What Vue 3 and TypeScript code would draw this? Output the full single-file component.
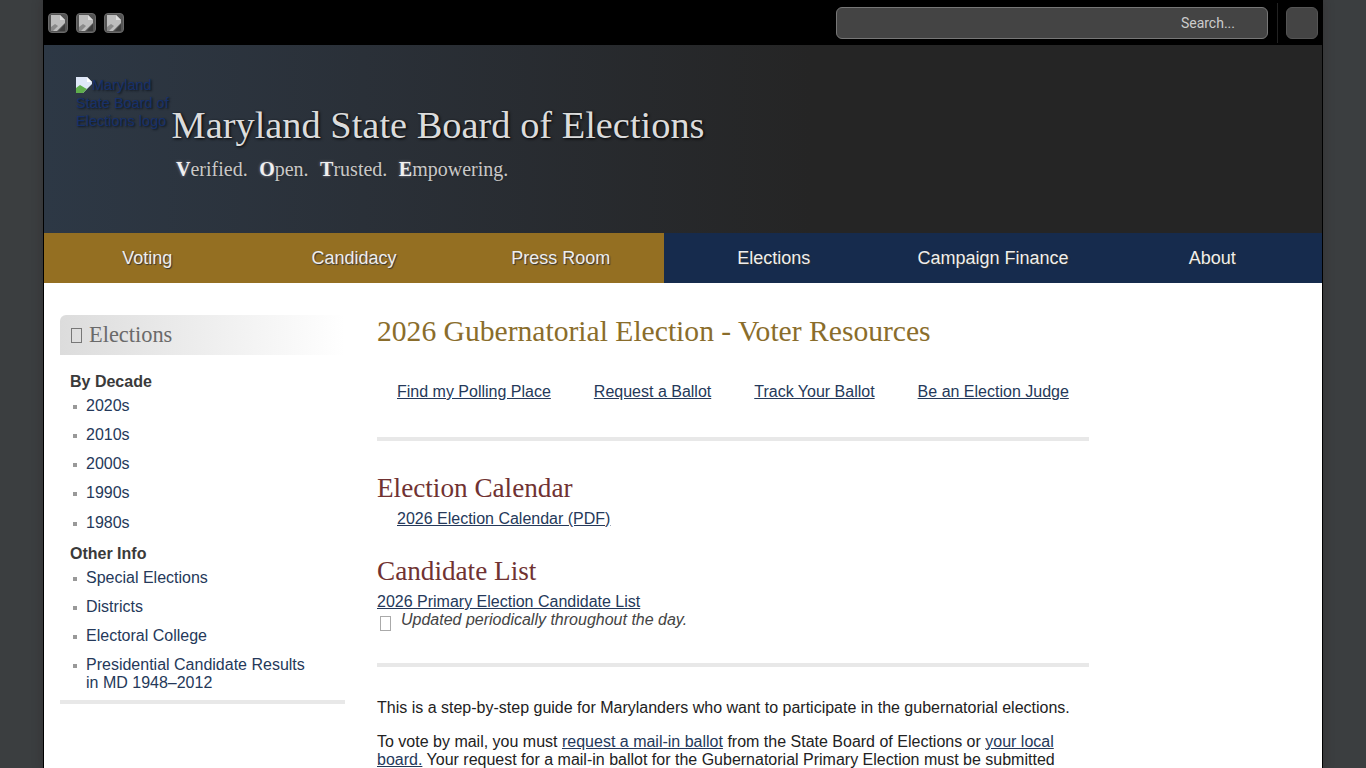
<template>
  <div class="page">
    <div class="topbar">
      <div class="social">
        <span v-for="n in 3" :key="n" class="social-btn">
          <svg width="14" height="16" viewBox="0 0 14 16">
            <path d="M0 0h9l5 5v3L6 16H0z" fill="#bdbdbd" />
            <path d="M9 0v5h5z" fill="#dedede" />
            <path d="M0 16v-4l4-3 3 2-5 5z" fill="#8a8a8a" />
            <path d="M14 9v7H8z" fill="#3c3c3c" />
          </svg>
        </span>
      </div>
      <div class="search-area">
        <div class="search-box"><span>Search...</span></div>
        <div class="divider"></div>
        <div class="search-btn"></div>
      </div>
    </div>

    <header class="banner">
      <div class="logo">
        <svg class="broken" width="16" height="16" viewBox="0 0 16 16">
          <path d="M0 0h11l5 5v2L7 16H0z" fill="#dfe8f8" />
          <path d="M11 0v5h5z" fill="#ffffff" />
          <path d="M0 16v-5l4-3 5 3 2 1-4 4z" fill="#5fae4c" />
        </svg>
        <span class="logo-alt">Maryland State Board of Elections logo</span>
      </div>
      <div class="titles">
        <h1>Maryland State Board of Elections</h1>
        <p class="tagline">
          <template v-for="w in motto" :key="w">
            <span class="word"><b>{{ w[0] }}</b>{{ w.slice(1) }}</span>
          </template>
        </p>
      </div>
    </header>

    <nav class="mainnav">
      <div class="nav-group gold">
        <a v-for="item in navGold" :key="item">{{ item }}</a>
      </div>
      <div class="nav-group navy">
        <a v-for="item in navBlue" :key="item">{{ item }}</a>
      </div>
    </nav>

    <div class="body-wrap">
      <aside class="sidebar">
        <h2 class="side-title"><span class="tofu"></span>Elections</h2>
        <h3>By Decade</h3>
        <ul>
          <li v-for="d in decades" :key="d"><a>{{ d }}</a></li>
        </ul>
        <h3 class="other">Other Info</h3>
        <ul>
          <li v-for="o in others" :key="o"><a>{{ o }}</a></li>
          <li class="multi"><a>Presidential Candidate Results<br />in MD 1948–2012</a></li>
        </ul>
        <div class="side-end"></div>
      </aside>

      <main class="content">
        <h1 class="page-title">2026 Gubernatorial Election - Voter Resources</h1>
        <div class="quick">
          <a v-for="q in quick" :key="q">{{ q }}</a>
        </div>
        <hr />
        <h2 class="section first">Election Calendar</h2>
        <p class="indent"><a>2026 Election Calendar (PDF)</a></p>
        <h2 class="section second">Candidate List</h2>
        <p class="tight"><a>2026 Primary Election Candidate List</a></p>
        <p class="note"><span class="tofu small"></span><em>Updated periodically throughout the day.</em></p>
        <hr class="low" />
        <p class="para">This is a step-by-step guide for Marylanders who want to participate in the gubernatorial elections.</p>
        <p class="para">
          To vote by mail, you must <a>request a mail-in ballot</a> from the State Board of Elections or
          <a>your local board.</a> Your request for a mail-in ballot for the Gubernatorial Primary Election must be submitted
        </p>
      </main>
    </div>
  </div>
</template>

<script setup lang="ts">
const motto: string[] = ['Verified.', 'Open.', 'Trusted.', 'Empowering.'];
const navGold: string[] = ['Voting', 'Candidacy', 'Press Room'];
const navBlue: string[] = ['Elections', 'Campaign Finance', 'About'];
const decades: string[] = ['2020s', '2010s', '2000s', '1990s', '1980s'];
const others: string[] = ['Special Elections', 'Districts', 'Electoral College'];
const quick: string[] = ['Find my Polling Place', 'Request a Ballot', 'Track Your Ballot', 'Be an Election Judge'];
</script>

<style>
html, body { height: 768px; overflow: hidden; background: #3b3e40; }
</style>

<style scoped>
.page {
  width: 1278px; height: 768px; margin-left: 44px; overflow: hidden;
  background: #fff; box-shadow: 0 0 0 1px #000, 0 0 10px 1px rgba(40, 30, 30, .35);
  font-family: "Liberation Sans", Arial, sans-serif; font-size: 16px; color: #333;
}

.topbar {
  height: 45px; background: #000; display: flex; justify-content: space-between; align-items: center;
  padding: 0 4px;
}
.social { display: flex; gap: 8px; }
.social-btn {
  width: 20px; height: 20px; border-radius: 4px; background: #555; border: 1px solid #6a6a6a; box-sizing: border-box;
  display: flex; align-items: center; justify-content: center;
}
.search-area { display: flex; align-items: center; height: 40px; margin-top: 1px; }
.search-box {
  width: 432px; height: 32px; box-sizing: border-box; background: #444; border: 1px solid #777; border-radius: 6px;
  display: flex; align-items: center; justify-content: flex-end; padding-right: 32px;
  font-family: Roboto, sans-serif; font-size: 14px; color: #ccc;
}
.divider { width: 1px; height: 40px; background: #222; margin: 0 8px 0 9px; }
.search-btn { width: 32px; height: 32px; box-sizing: border-box; background: #444; border: 1px solid #555; border-radius: 6px; }

.banner {
  height: 188px; box-sizing: border-box; display: flex; padding: 32px 0 0 32px;
  background: linear-gradient(to right, #2d3845, #2a3038 25%, #252525 60%);
}
.logo {
  width: 96px; height: 54px; margin-top: -1px; line-height: 18px; font-size: 14.5px; color: #16306a; flex: none;
  text-shadow: 1px 1px 2px #10161e;
}
.broken { vertical-align: -2px; transform: translateY(1px); }
.logo-alt { color: #16306a; }
.titles { padding-top: 26px; margin-left: -0.5px; }
.titles h1 {
  margin: 0; font-family: "Liberation Serif", serif; font-weight: 400; font-size: 38.4px; line-height: 44px; color: #dcdcdc;
  text-shadow: 1px 1px 3px #000;
}
.tagline {
  margin: 9px 0 0 4.5px; font-family: "Liberation Serif", serif; font-size: 20px; line-height: 26px; color: #c8c8c8;
  display: flex; gap: 11.5px; text-shadow: 0 0 2px #222;
}
.tagline b { color: #f0f0f0; font-size: 20px; text-shadow: 0 0 3px #889; }

.mainnav { display: flex; height: 50px; font-size: 18px; color: #eee; }
.nav-group { display: flex; }
.nav-group a { display: flex; align-items: center; justify-content: center; flex: 1; text-shadow: 1px 1px 1px #333; }
.gold { width: 620px; background: #946f22; }
.navy { width: 658px; background: #162b4d; }

.body-wrap { display: flex; background: #fff; }
.sidebar { width: 285px; margin: 32px 0 0 16px; flex: none; }
.side-title {
  margin: 0; height: 40px; display: flex; align-items: center; padding-left: 11px;
  font-family: "Liberation Serif", serif; font-weight: 400; font-size: 22.4px; color: #6a6a6a;
  background: linear-gradient(to right, #dcdcdc, #fff); border-radius: 6px 0 0 0;
}
.tofu { display: inline-block; width: 9px; height: 13px; border: 1px solid #777; margin-right: 7px; }
.sidebar h3 { margin: 18px 0 0 10px; font-size: 16px; line-height: 18px; font-weight: 700; color: #3a3a3a; }
.sidebar h3.other { margin-top: 13px; }
.sidebar ul { list-style: none; margin: 0; padding: 0; }
.sidebar li { position: relative; padding-left: 26px; line-height: 18px; margin-top: 11.2px; color: #25395a; }
.sidebar h3 + ul li:first-child { margin-top: 5.85px; }
.sidebar h3.other + ul li:first-child { margin-top: 6.2px; }
.sidebar li::before {
  content: ""; position: absolute; left: 13px; top: 8px; width: 4px; height: 4px; background: #999;
}
.side-end { height: 4px; background: #e8e8e8; margin-top: 8px; }

.content { width: 712px; margin: 32px 0 0 32px; flex: none; }
.page-title {
  margin: 0; font-family: "Liberation Serif", serif; font-weight: 400; font-size: 29.6px; line-height: 33px; color: #8a6d2b;
}
.content a { color: #25395a; text-decoration: underline; }
.quick { display: flex; gap: 43px; padding: 35px 0 0 20px; line-height: 18px; }
hr { border: 0; height: 4px; background: #e8e8e8; margin: 36px 0 0; }
hr.low { margin-top: 32px; }
.section {
  margin: 0; font-family: "Liberation Serif", serif; font-weight: 400; font-size: 27.2px; line-height: 30px; color: #703232;
}
.section.first { margin-top: 32px; }
.section.second { margin-top: 28px; }
.content p { margin: 0; line-height: 18px; }
.indent { padding-left: 20px; margin-top: 7px !important; }
.tight { margin-top: 7px !important; }
.note { display: flex; align-items: flex-start; color: #444; }
.tofu.small { margin: 5px 10px 0 3px; flex: none; border-color: #aaa; }
.content p.para { margin-top: 16px; color: #222; }
.content hr.low + p.para { margin-top: 32px; }
</style>
